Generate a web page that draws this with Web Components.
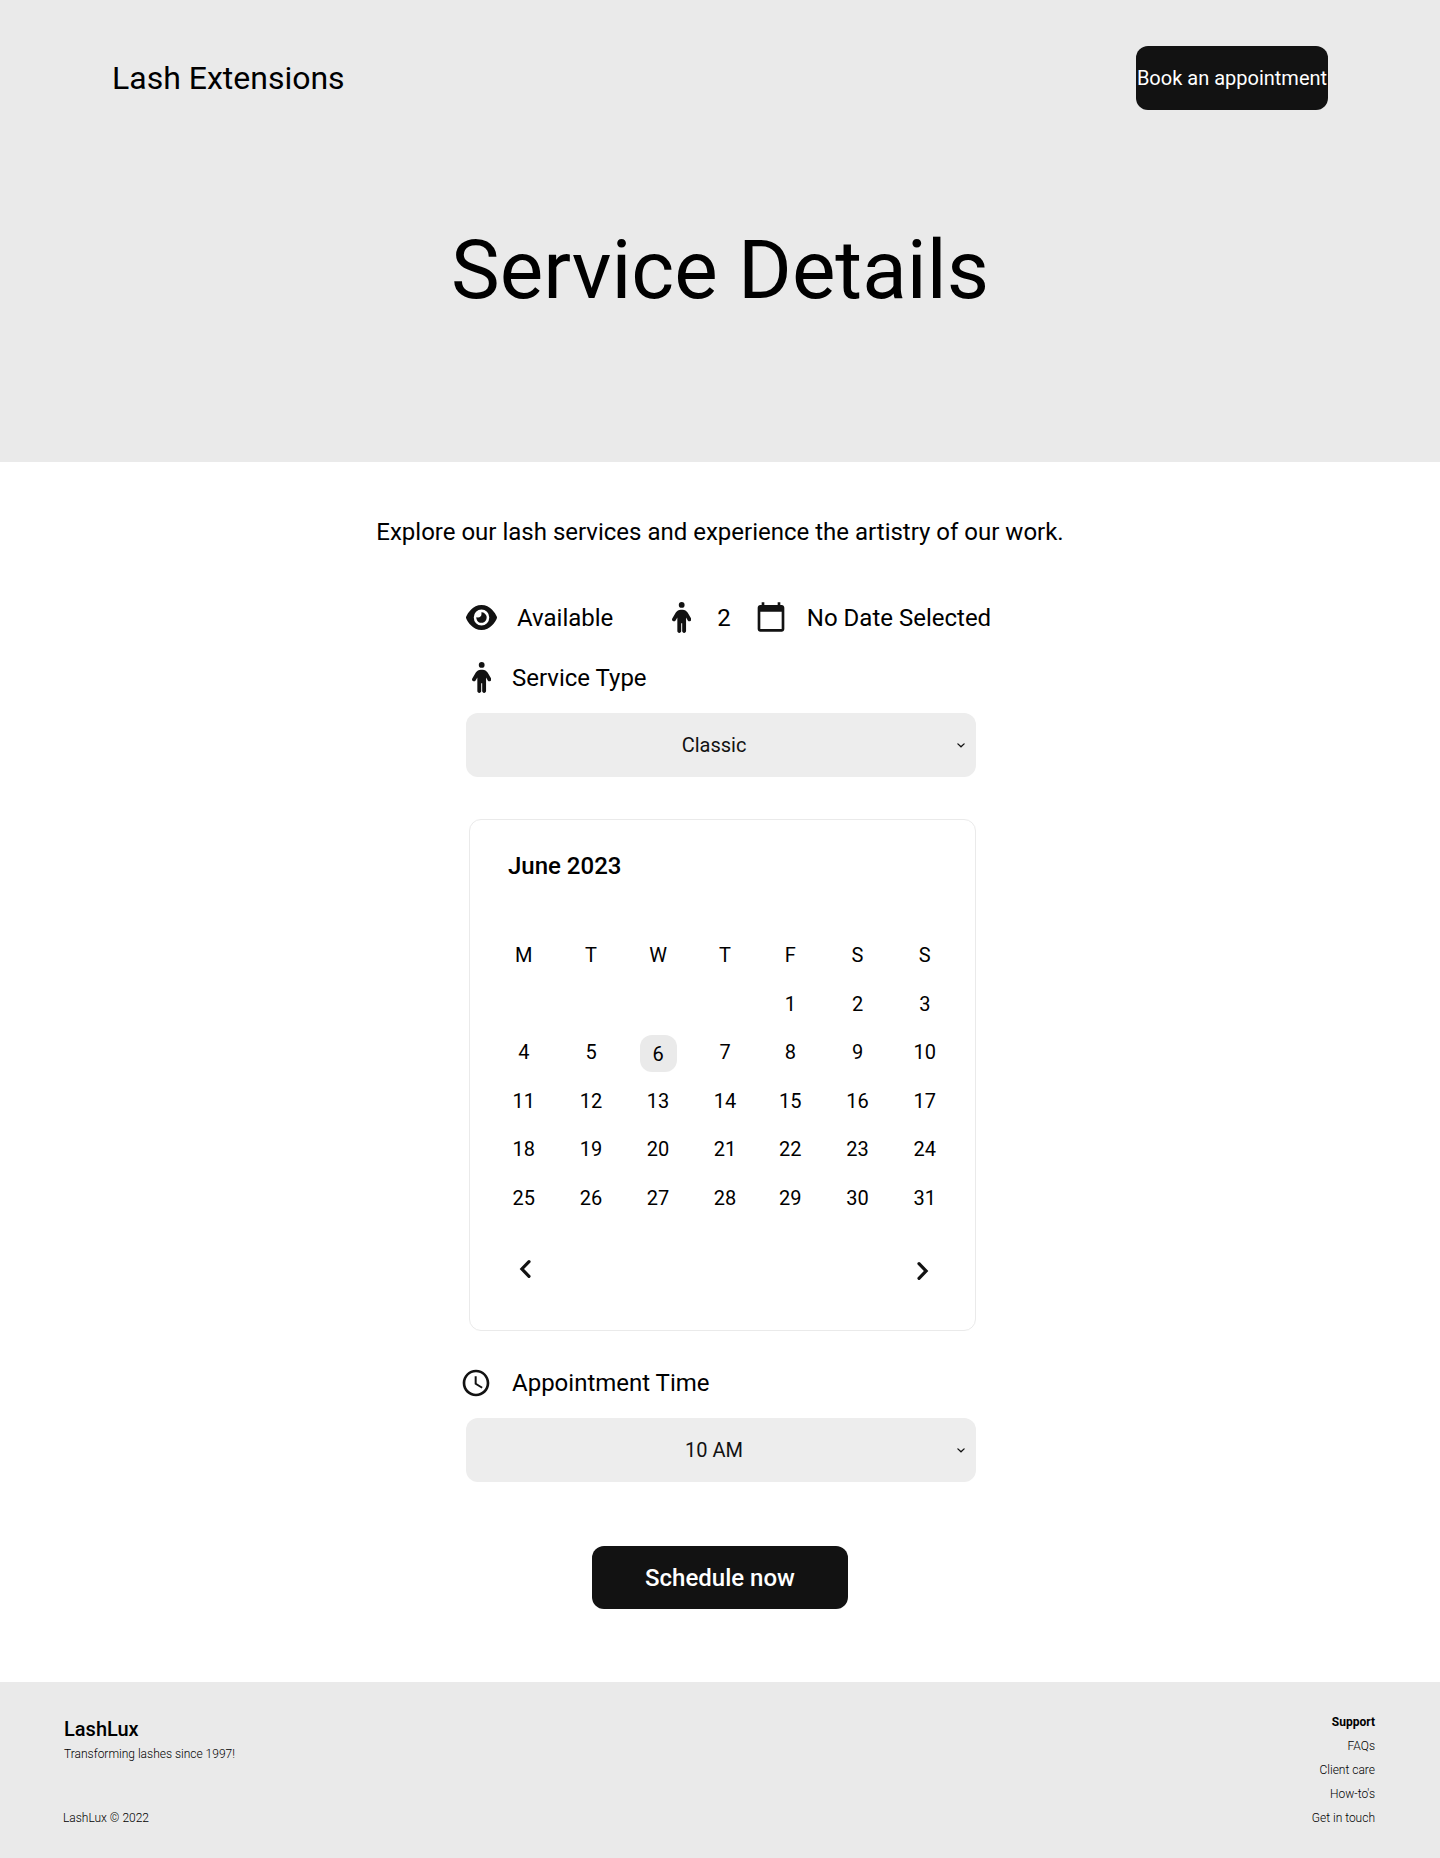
<!DOCTYPE html>
<html lang="en">
<head>
<meta charset="utf-8">
<title>Lash Extensions – Service Details</title>
<style>
  body { margin: 0; background: #fff; color: #000; font-family: Roboto, "Liberation Sans", sans-serif; }
</style>
</head>
<body>
<booking-page></booking-page>

<script>
const define = (name, html, setup) => {
  const tpl = document.createElement('template');
  tpl.innerHTML = html;
  customElements.define(name, class extends HTMLElement {
    connectedCallback() {
      if (this.shadowRoot) return;
      const root = this.attachShadow({ mode: 'open' });
      root.append(tpl.content.cloneNode(true));
      if (setup) setup(root, this);
    }
  });
};

/* Icon set: [viewBox, width, height, markup] */
const ICONS = {
  eye: ['0 32 576 448', 31, 25, '<path d="M288 32c-80.8 0-145.5 36.8-192.6 80.6C48.6 156 17.3 208 2.5 243.7c-3.3 7.9-3.3 16.7 0 24.6C17.3 304 48.6 356 95.4 399.4C142.5 443.2 207.2 480 288 480s145.5-36.8 192.6-80.6c46.8-43.5 78.1-95.4 93-131.1c3.3-7.9 3.3-16.7 0-24.6c-14.9-35.7-46.2-87.7-93-131.1C433.5 68.8 368.8 32 288 32zM144 256a144 144 0 1 1 288 0 144 144 0 1 1 -288 0zm144-64c0 35.3-28.7 64-64 64c-7.1 0-13.9-1.2-20.3-3.3c-5.5-1.8-11.9 1.6-11.7 7.4c.3 6.9 1.3 13.8 3.2 20.7c13.7 51.2 66.4 81.6 117.6 67.9s81.6-66.4 67.9-117.6c-11.1-41.5-47.8-69.4-88.6-71.1c-5.8-.2-9.2 6.1-7.4 11.7c2.1 6.4 3.3 13.2 3.3 20.3z"/>'],
  person: ['0 0 320 512', 19.4, 31, '<path d="M112 48a48 48 0 1 1 96 0A48 48 0 1 1 112 48zm40 304V480c0 17.7-14.3 32-32 32s-32-14.3-32-32V256.9L59.4 304.5c-9.1 15.1-28.8 20-43.9 10.9s-20-28.8-10.9-43.9l58.3-97c17.4-28.9 48.6-46.6 82.3-46.6h29.7c33.7 0 64.9 17.7 82.3 46.6l58.3 97c9.1 15.1 4.2 34.8-10.9 43.9s-34.8 4.2-43.9-10.9L232 256.9V480c0 17.7-14.3 32-32 32s-32-14.3-32-32V352H152z"/>'],
  calendar: ['0 0 24 24', 32, 32, '<path d="M20 3h-1V1h-2v2H7V1H5v2H4c-1.1 0-2 .9-2 2v16c0 1.1.9 2 2 2h16c1.1 0 2-.9 2-2V5c0-1.1-.9-2-2-2zm0 18H4V8h16v13z"/>'],
  clock: ['0 0 24 24', 32, 32, '<path d="M11.99 2C6.47 2 2 6.48 2 12s4.47 10 9.99 10C17.52 22 22 17.52 22 12S17.52 2 11.99 2zM12 20c-4.42 0-8-3.58-8-8s3.58-8 8-8 8 3.58 8 8-3.58 8-8 8zm.5-13H11v6l5.25 3.15.75-1.23-4.5-2.67z"/>'],
  prev: ['0 0 12 18', 12, 18, '<path d="M10 1.7 2.9 9l7.1 7.3" fill="none" stroke="#121212" stroke-width="3.2" stroke-linecap="round"/>'],
  next: ['0 0 12 18', 12, 18, '<path d="M2 1.7 9.1 9 2 16.3" fill="none" stroke="#121212" stroke-width="3.2" stroke-linecap="round"/>'],
  caret: ['0 0 8 5', 8, 5, '<path d="M.9.9 4 3.8 7.1.9" fill="none" stroke="#121212" stroke-width="1.3" stroke-linecap="round"/>']
};

define('app-icon', `<style>
  :host { display: block; flex: none; } svg { display: block; fill: #121212; }
</style>`, (root, host) => {
  const [box, w, h, body] = ICONS[host.getAttribute('name')];
  root.innerHTML += `<svg viewBox="${box}" width="${w}" height="${h}" preserveAspectRatio="none">${body}</svg>`;
});

define('action-button', `<style>
  :host { display: block; }
  button { all: unset; box-sizing: border-box; display: flex; align-items: center; justify-content: center;
    width: 100%; height: var(--button-height, 64px); border-radius: 12px; background: #121212; color: #fff; white-space: nowrap; }
</style><button><slot></slot></button>`);

define('page-hero', `<style>
  :host { display: block; box-sizing: border-box; height: 462px; padding: 46px 112px 0; background: #eaeaea; }
  header { display: flex; justify-content: space-between; align-items: center; height: 64px; }
  .brand { font-size: 32px; line-height: 38px; }
  action-button { width: 192px; font-size: 20px; line-height: 24px; }
  h1 { margin: 112px 0 0; font-weight: 400; font-size: 82px; line-height: 96px; text-align: center; }
</style>
<header><span class="brand">Lash Extensions</span><action-button>Book an appointment</action-button></header>
<h1><slot></slot></h1>`);

define('icon-label', `<style>
  :host { display: flex; align-items: center; height: 32px; font-size: 24px; line-height: 28px; white-space: nowrap; }
  .icon { display: flex; flex: none; justify-content: center; width: var(--icon-col, 46px); margin-bottom: var(--icon-lift, 2px); }
</style><span class="icon"><slot name="icon"></slot></span><span><slot></slot></span>`);

define('select-field', `<style>
  :host { display: flex; align-items: center; box-sizing: border-box; height: 64px; padding-right: 11px;
    border-radius: 12px; background: #ededed; color: #121212; font-size: 20px; line-height: 24px; }
  span { flex: 1; text-align: center; padding-right: 3px; margin-right: -8px; }
</style><span><slot></slot></span><app-icon name="caret"></app-icon>`);

define('month-calendar', `<style>
  :host { display: block; box-sizing: border-box; width: 507px; height: 512px; padding: 32px 20px 0 20px;
    border: 1px solid #eaeaea; border-radius: 12px; }
  h2 { margin: 0 0 0 18px; font-weight: 500; font-size: 24px; line-height: 28px; }
  .grid { display: grid; grid-template-columns: 67.5px 67px 67px 67px 63.5px 71px 63.5px; grid-auto-rows: 48.5px;
    margin-top: 51px; font-size: 20px; line-height: 24px; }
  .grid span { display: flex; align-items: center; justify-content: center; }
  .grid b { display: flex; align-items: center; justify-content: center; box-sizing: border-box; width: 37px; height: 37px;
    margin-top: 2px; margin-left: 1px; padding: 1px 1px 0 0; border-radius: 12px; background: #eaeaea; font-weight: 400; }
  nav { display: flex; justify-content: space-between; margin: 38px 26px 0 29px; }
  .next { margin-top: 2px; }
</style>
<h2></h2><div class="grid"></div>
<nav><app-icon name="prev"></app-icon><app-icon class="next" name="next"></app-icon></nav>`, (root, host) => {
  root.querySelector('h2').textContent = host.getAttribute('month');
  const lead = +host.getAttribute('lead'), days = +host.getAttribute('days'), sel = +host.getAttribute('selected');
  const cells = [...'MTWTFSS', ...Array(lead).fill(''), ...Array.from({ length: days }, (_, i) => i + 1)];
  root.querySelector('.grid').innerHTML = cells.map(c => c === sel ? `<span><b>${c}</b></span>` : `<span>${c}</span>`).join('');
});

define('site-footer', `<style>
  :host { display: flex; justify-content: space-between; box-sizing: border-box; height: 176px;
    padding: 28px 65px 0 63px; background: #eaeaea; font-size: 12px; line-height: 24px; font-weight: 300; }
  .left, .right { display: flex; flex-direction: column; height: 120px; }
  .right { align-items: flex-end; }
  .name { margin: 7px 0 0 1px; font-size: 20px; font-weight: 500; line-height: 24px; }
  .tag { margin: 1px 0 0 1px; line-height: 24px; }
  .copy { margin-top: auto; }
  strong { font-weight: 700; }
</style>
<div class="left"><span class="name">LashLux</span><span class="tag">Transforming lashes since 1997!</span><span class="copy">LashLux © 2022</span></div>
<div class="right"><strong>Support</strong><span>FAQs</span><span>Client care</span><span>How-to's</span><span>Get in touch</span></div>`);

define('booking-page', `<style>
  :host { display: block; }
  .intro { margin: 54px 0 0; text-align: center; font-size: 24px; line-height: 32px; }
  main { display: flex; flex-direction: column; width: 510px; margin: 54px 0 0 466px; }
  .meta { display: flex; height: 32px; }
  .eye { --icon-col: 31px; column-gap: 20px; }
  .people { --icon-col: 20px; column-gap: 26px; margin-left: 58px; }
  .date { --icon-col: 32px; column-gap: 19.5px; margin-left: 24.5px; }
  .type { margin-top: 28px; --icon-col: 31px; column-gap: 15px; }
  .type + select-field { margin-top: 19px; }
  month-calendar { margin: 42px 0 0 3px; }
  .time { margin: 36px 0 0 -5.7px; --icon-col: 32px; --icon-lift: 0; column-gap: 19.7px; }
  .time + select-field { margin-top: 19px; }
  .submit { width: 256px; margin: 64px 0 73px 126px; --button-height: 63px; font-size: 24px; line-height: 28px; font-weight: 500; }
</style>
<page-hero>Service Details</page-hero>
<p class="intro">Explore our lash services and experience the artistry of our work.</p>
<main>
  <div class="meta">
    <icon-label class="eye"><app-icon slot="icon" name="eye"></app-icon>Available</icon-label>
    <icon-label class="people"><app-icon slot="icon" name="person"></app-icon>2</icon-label>
    <icon-label class="date"><app-icon slot="icon" name="calendar"></app-icon>No Date Selected</icon-label>
  </div>
  <icon-label class="type"><app-icon slot="icon" name="person"></app-icon>Service Type</icon-label>
  <select-field>Classic</select-field>
  <month-calendar month="June 2023" lead="4" days="31" selected="6"></month-calendar>
  <icon-label class="time"><app-icon slot="icon" name="clock"></app-icon>Appointment Time</icon-label>
  <select-field>10 AM</select-field>
  <action-button class="submit">Schedule now</action-button>
</main>
<site-footer></site-footer>`);
</script>
</body>
</html>
